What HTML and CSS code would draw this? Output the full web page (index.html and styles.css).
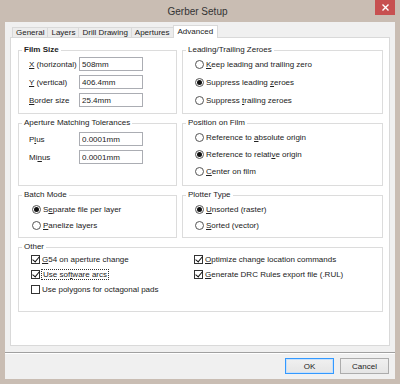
FILE: index.html
```html
<!DOCTYPE html>
<html lang="en">

<head>
  <meta charset="UTF-8" />
  <meta name="viewport" content="width=device-width, initial-scale=1.0" />
  <link rel="stylesheet" href="styles.css">
  <title>Gerber Setup</title>
</head>

<body>
  <div class="window">
    <div class="titlebar">
      <span class="title">Gerber Setup</span>
      <div class="close">
        <svg width="7" height="7" viewBox="0 0 7 7">
          <path d="M0.5 0.5 L6.5 6.5 M6.5 0.5 L0.5 6.5" stroke="#fff" stroke-width="1.4" />
        </svg>
      </div>
    </div>

    <div class="client">
      <div class="tabs">
        <div class="tab">General</div>
        <div class="tab">Layers</div>
        <div class="tab">Drill Drawing</div>
        <div class="tab">Apertures</div>
        <div class="tab active">Advanced</div>
      </div>

      <div class="panel">
        <div class="groups">
          <fieldset class="group film">
            <legend class="bold">Film Size</legend>
            <div class="fields">
              <label><u>X</u> (horizontal)</label>
              <input class="input" value="508mm" />
              <label><u>Y</u> (vertical)</label>
              <input class="input" value="406.4mm" />
              <label><u>B</u>order size</label>
              <input class="input" value="25.4mm" />
            </div>
          </fieldset>

          <fieldset class="group zeroes">
            <legend>Leading/Trailing Zeroes</legend>
            <div class="options wide">
              <div class="option"><span class="radio"></span><span><u>K</u>eep leading and trailing zero</span></div>
              <div class="option"><span class="radio on"></span><span>Suppress leading <u>z</u>eroes</span></div>
              <div class="option"><span class="radio"></span><span>Suppress <u>t</u>railing zeroes</span></div>
            </div>
          </fieldset>

          <fieldset class="group tolerances">
            <legend>Aperture Matching Tolerances</legend>
            <div class="fields">
              <label>P<u>l</u>us</label>
              <input class="input" value="0.0001mm" />
              <label>Mi<u>n</u>us</label>
              <input class="input" value="0.0001mm" />
            </div>
          </fieldset>

          <fieldset class="group position">
            <legend>Position on Film</legend>
            <div class="options">
              <div class="option"><span class="radio"></span><span>Reference to <u>a</u>bsolute origin</span></div>
              <div class="option"><span class="radio on"></span><span>Reference to relati<u>v</u>e origin</span></div>
              <div class="option"><span class="radio"></span><span><u>C</u>enter on film</span></div>
            </div>
          </fieldset>

          <fieldset class="group batch">
            <legend>Batch Mode</legend>
            <div class="options tight">
              <div class="option"><span class="radio on"></span><span>S<u>e</u>parate file per layer</span></div>
              <div class="option"><span class="radio"></span><span><u>P</u>anelize layers</span></div>
            </div>
          </fieldset>

          <fieldset class="group plotter">
            <legend>Plotter Type</legend>
            <div class="options tight">
              <div class="option"><span class="radio on"></span><span><u>U</u>nsorted (raster)</span></div>
              <div class="option"><span class="radio"></span><span><u>S</u>orted (vector)</span></div>
            </div>
          </fieldset>

          <fieldset class="group other">
            <legend>Other</legend>
            <div class="checks">
              <div class="option"><span class="check on"></span><span><u>G</u>54 on aperture change</span></div>
              <div class="option"><span class="check on"></span><span><u>O</u>ptimize change location commands</span></div>
              <div class="option"><span class="check on"></span><span class="focus">Use sof<u>t</u>ware arcs</span></div>
              <div class="option"><span class="check on"></span><span><u>G</u>enerate DRC Rules export file (.RUL)</span></div>
              <div class="option"><span class="check"></span><span>Use polygons for octagonal pads</span></div>
            </div>
          </fieldset>
        </div>
      </div>

      <div class="footer">
        <button class="btn default">OK</button>
        <button class="btn">Cancel</button>
      </div>
    </div>
  </div>
</body>

</html>
```

FILE: styles.css
```css
* {
  margin: 0px;
  padding: 0px;
  box-sizing: border-box;
  font-family: "Liberation Sans", Arial, sans-serif;
}

body {
  background-color: #c9bdb3;
}

u {
  text-decoration: underline;
  text-underline-offset: 1px;
}

.window {
  width: 400px;
  height: 384px;
  background-color: #c9bdb3;
  display: flex;
  flex-direction: column;
}

.titlebar {
  height: 22px;
  display: grid;
  grid-template-columns: 1fr auto 1fr;
  padding-right: 5px;
}

.title {
  grid-column: 2;
  align-self: center;
  font-size: 10px;
  color: #333;
}

.close {
  grid-column: 3;
  justify-self: end;
  width: 20px;
  height: 15px;
  background-color: #c75050;
  display: flex;
  align-items: center;
  justify-content: center;
}

.close svg {
  display: block;
}

.client {
  margin: 0 5px;
  height: 357px;
  background-color: #f0f0f0;
  display: flex;
  flex-direction: column;
  font-size: 8px;
  color: #222;
}

.tabs {
  display: flex;
  align-items: flex-end;
  height: 15px;
  padding-left: 7px;
  position: relative;
  z-index: 1;
}

.tab {
  height: 10px;
  line-height: 9px;
  padding: 0 3px;
  margin-right: -1px;
  border: 1px solid #d9d9d9;
  border-bottom: none;
  background-color: #ececec;
  color: #222;
}

.tab.active {
  height: 13px;
  margin-bottom: -1px;
  line-height: 11px;
  padding: 0 4px;
  background-color: #fff;
}

.panel {
  margin: 0 5px;
  height: 309px;
  border: 1px solid #d9d9d9;
  background-color: #fff;
  padding: 7px 6px 0 7px;
}

.groups {
  display: grid;
  grid-template-columns: 159px 201px;
  column-gap: 5px;
  row-gap: 4px;
}

.group {
  border: 1px solid #dcdcdc;
  padding: 0;
  min-width: 0;
}

.group legend {
  margin-left: 3px;
  padding: 0 2px;
  line-height: 10px;
  color: #222;
}

.group legend.bold {
  font-weight: bold;
}

.film,
.zeroes {
  height: 69px;
}

.tolerances,
.position {
  height: 68px;
}

.batch,
.plotter {
  height: 48px;
}

.other {
  grid-column: 1 / 3;
  height: 70px;
}

.fields {
  display: grid;
  grid-template-columns: 50px 64px;
  row-gap: 4px;
  align-items: center;
  padding: 2px 0 0 10px;
}

.tolerances .fields {
  padding-top: 4px;
}

.input {
  height: 14px;
  width: 64px;
  border: 1px solid #abadb3;
  padding-left: 2px;
  font-size: 8px;
  color: #222;
  background-color: #fff;
}

.input:focus-visible {
  outline: 0;
}

.options {
  display: flex;
  flex-direction: column;
  gap: 3px;
  padding: 2px 0 0 12px;
}

.options.wide {
  gap: 4px;
}

.options.tight {
  gap: 2px;
}

.batch .options {
  padding-left: 13px;
}

.option {
  height: 14px;
  display: flex;
  align-items: center;
  gap: 2px;
  white-space: nowrap;
}

.radio {
  width: 9px;
  height: 9px;
  border: 1px solid #555;
  border-radius: 50%;
  background-color: #fff;
  display: flex;
  align-items: center;
  justify-content: center;
  flex-shrink: 0;
}

.radio.on::after {
  content: "";
  width: 5px;
  height: 5px;
  border-radius: 50%;
  background-color: #111;
}

.checks {
  display: grid;
  grid-template-columns: 163px auto;
  row-gap: 1px;
  padding-left: 12px;
}

.check {
  width: 9px;
  height: 9px;
  border: 1px solid #333;
  background-color: #fff;
  flex-shrink: 0;
  position: relative;
}

.check.on::after {
  content: "";
  position: absolute;
  left: 2px;
  top: -1px;
  width: 3px;
  height: 6px;
  border-right: 1.6px solid #111;
  border-bottom: 1.6px solid #111;
  transform: rotate(40deg);
}

.focus {
  outline: 1px dotted #333;
  outline-offset: 0px;
  padding: 0 1px;
}

.footer {
  margin-top: 6px;
  border-top: 1px solid #a0a0a0;
  box-shadow: inset 0 1px 0 #fff;
  flex: 1;
  display: flex;
  justify-content: flex-end;
  align-items: flex-start;
  gap: 6px;
  padding: 5px 6px 0 0;
}

.btn {
  width: 49px;
  height: 16px;
  font-size: 8px;
  color: #222;
  border: 1px solid #acacac;
  background: linear-gradient(#f0f0f0, #e5e5e5);
}

.btn.default {
  border-color: #3399ff;
  box-shadow: inset 0 0 0 1px #c7e0fa;
}
```
